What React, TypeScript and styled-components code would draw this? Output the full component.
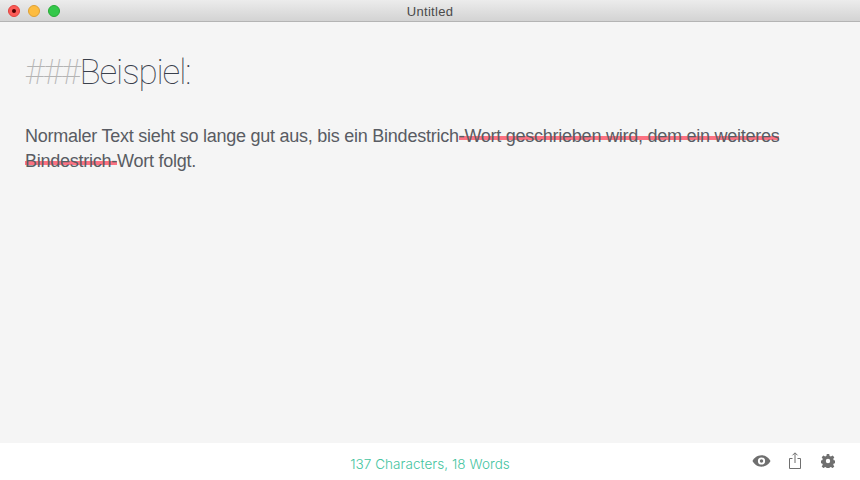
import React from "react";
import styled, { createGlobalStyle } from "styled-components";

const Global = createGlobalStyle`
  html, body { margin: 0; padding: 0; height: 100%; overflow: hidden; background: #f5f5f5; }
  #root { height: 100%; }
`;

const Window = styled.div`
  width: 860px;
  height: 480px;
  display: flex;
  flex-direction: column;
  background: #f5f5f5;
  font-family: "Liberation Sans", Arial, sans-serif;
`;

const TitleBar = styled.header`
  height: 21px;
  flex: none;
  position: relative;
  display: flex;
  align-items: center;
  justify-content: center;
  background: linear-gradient(#ececec, #d3d3d3);
  border-bottom: 1px solid #b4b4b4;
`;

const Lights = styled.div`
  position: absolute;
  left: 8px;
  top: 5px;
  display: flex;
  gap: 8px;
`;

const Light = styled.span<{ $fill: string; $edge: string }>`
  width: 12px;
  height: 12px;
  box-sizing: border-box;
  border-radius: 50%;
  background: ${(p) => p.$fill};
  border: 0.5px solid ${(p) => p.$edge};
  display: flex;
  align-items: center;
  justify-content: center;
`;

const CloseDot = styled.span`
  width: 4px;
  height: 4px;
  border-radius: 50%;
  background: #4d0000;
`;

const WindowTitle = styled.span`
  font-size: 13px;
  letter-spacing: 0.3px;
  padding-top: 1px;
  color: #4a4a4a;
`;

const Editor = styled.main`
  flex: 1;
  padding: 0 72px 0 25px;
  min-height: 0;
`;

const Heading = styled.h1`
  margin: 31px 0 0;
  height: 40px;
  font-family: Roboto, "Liberation Sans", sans-serif;
  font-size: 35px;
  line-height: 40px;
  font-weight: 100;
  letter-spacing: -1.1px;
  color: #3a404c;
`;

const Hashes = styled.span`
  color: #b4b4b4;
  letter-spacing: -1px;
`;

const Paragraph = styled.p`
  margin: 31px 0 0;
  font-size: 18px;
  line-height: 25px;
  color: #595c63;
  letter-spacing: -0.25px;
`;

const Struck = styled.span`
  background: linear-gradient(
    transparent 10px,
    rgba(252, 85, 105, 0.82) 10px,
    rgba(252, 85, 105, 0.82) 14px,
    transparent 14px
  );
  -webkit-box-decoration-break: clone;
  box-decoration-break: clone;
`;

const Footer = styled.footer`
  height: 37px;
  flex: none;
  position: relative;
  display: flex;
  align-items: center;
  justify-content: center;
  background: #ffffff;
`;

const Counter = styled.span`
  font-family: Inter, "Liberation Sans", sans-serif;
  font-weight: 300;
  font-size: 13.5px;
  letter-spacing: 0.05px;
  padding-top: 5px;
  color: #45c4a0;
`;

const Tools = styled.div`
  position: absolute;
  left: 752px;
  top: 9px;
  display: flex;
  align-items: center;
  color: #6f6f6f;
`;

const Icon = styled.svg<{ $gap?: number }>`
  display: block;
  flex: none;
  margin-right: ${(p) => p.$gap ?? 0}px;
`;

export default function App() {
  return (
    <Window>
      <Global />
      <TitleBar>
        <Lights>
          <Light $fill="#fc5b57" $edge="#e0443e">
            <CloseDot />
          </Light>
          <Light $fill="#fdbc40" $edge="#dea034" />
          <Light $fill="#34c84a" $edge="#27aa35" />
        </Lights>
        <WindowTitle>Untitled</WindowTitle>
      </TitleBar>
      <Editor>
        <Heading>
          <Hashes>###</Hashes>Beispiel:
        </Heading>
        <Paragraph>
          Normaler Text sieht so lange gut aus, bis ein Bindestrich
          <Struck>-Wort geschrieben wird, dem ein weiteres Bindestrich-</Struck>
          Wort folgt.
        </Paragraph>
      </Editor>
      <Footer>
        <Counter>137 Characters, 18 Words</Counter>
        <Tools>
          <Icon $gap={18} width="19" height="14" viewBox="0 0 20 14">
            <path
              fillRule="evenodd"
              fill="currentColor"
              d="M10 1C5.500 1 2 4 .5 7 2 10 5.500 13 10 13s8-3 9.500-6C18 4 14.500 1 10 1Zm0 2.200a3.800 3.800 0 1 1 0 7.600 3.800 3.800 0 0 1 0-7.600Zm0 2a1.800 1.800 0 1 0 0 3.600 1.800 1.800 0 0 0 0-3.600Z"
            />
          </Icon>
          <Icon $gap={20} width="12" height="17" viewBox="0 0 12 17" fill="none" stroke="currentColor" strokeWidth="1">
            <path d="M3.500 6.500H.5v10h11v-10H8.500M6 11V1M3.500 3.300 6 .8l2.500 2.500" />
          </Icon>
          <Icon width="14" height="14" viewBox="0 0 14 14">
            <path
              fillRule="evenodd"
              fill="currentColor"
              d="M5.800 0h2.400l.4 2 1.300.6L11.600 1.500l1.700 1.700-1.100 1.700.6 1.300 2 .4v2.400l-2 .4-.6 1.300 1.100 1.700-1.700 1.700-1.700-1.100-1.300.6-.4 2H5.800l-.4-2-1.300-.6-1.700 1.100L.7 12.400l1.100-1.700-.6-1.300-2-.4V6.600l2-.4.6-1.300L.7 3.200 2.400 1.500l1.700 1.100 1.300-.6.400-2ZM7 4.800a2.200 2.200 0 1 0 0 4.400 2.200 2.200 0 0 0 0-4.400Z"
            />
          </Icon>
        </Tools>
      </Footer>
    </Window>
  );
}
